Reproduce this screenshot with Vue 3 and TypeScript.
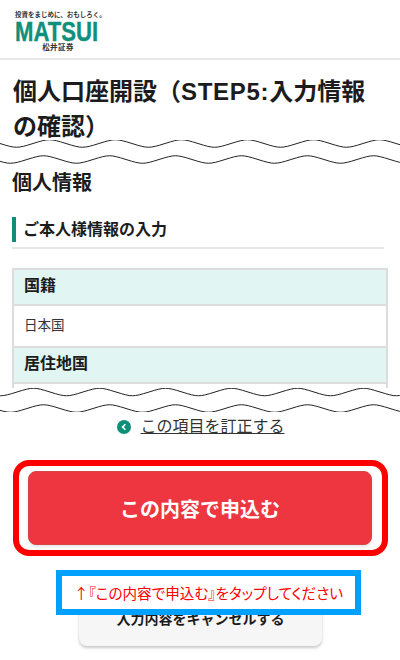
<script setup lang="ts">
const period = 66
function wave(y: number, phase: number): string {
  let d = `M${-period + phase} ${y}`
  for (let x = -period + phase; x < 420; x += period) {
    d += ` C${x + 16} ${y - 5} ${x + 17} ${y - 5} ${x + 33} ${y} S${x + 50} ${y + 5} ${x + 66} ${y}`
  }
  return d
}
const tearA = [wave(3.5, 33), wave(19.5, 27)]
const tearB = [wave(4, 17), wave(20.5, 27)]
</script>

<template>
  <div class="page">
    <header class="header">
      <div class="logo">
        <span class="tagline">投資をまじめに、おもしろく。</span>
        <span class="brand">MATSUI</span>
        <span class="firm">松井証券</span>
      </div>
    </header>

    <h1 class="title">個人口座開設（<span class="latin">STEP5:</span>入力情報の確認）</h1>

    <svg class="tear" viewBox="0 0 400 24" width="400" height="24">
      <path :d="tearA[0]" class="wave" />
      <path :d="tearA[1]" class="wave" />
    </svg>

    <h2 class="section">個人情報</h2>
    <h3 class="sub">ご本人様情報の入力</h3>

    <div class="table-clip">
      <div class="table">
        <div class="th">国籍</div>
        <div class="td">日本国</div>
        <div class="th">居住地国</div>
        <div class="td"></div>
      </div>
    </div>

    <svg class="tear" viewBox="0 0 400 24" width="400" height="24">
      <path :d="tearB[0]" class="wave" />
      <path :d="tearB[1]" class="wave" />
    </svg>

    <div class="fix">
      <svg class="fix-icon" viewBox="0 0 14 14" width="14" height="14">
        <circle cx="7" cy="7" r="7" fill="#0f8f78" />
        <path d="M8.4 4.2 5.6 7l2.8 2.8" fill="none" stroke="#fff" stroke-width="1.6" />
      </svg>
      <span class="fix-text">この項目を訂正する</span>
    </div>

    <div class="frame">
      <div class="apply">この内容で申込む</div>
    </div>

    <div class="cancel-wrap">
      <div class="cancel">入力内容をキャンセルする</div>
      <div class="note">↑『この内容で申込む』をタップしてください</div>
    </div>
  </div>
</template>

<style>
html,
body {
  margin: 0;
  background: #fff;
}
</style>

<style scoped>
.page {
  width: 400px;
  height: 660px;
  overflow: hidden;
  background: #fff;
  color: #1c1c1c;
  font-family: "Liberation Sans", "Noto Sans CJK JP", sans-serif;
  display: flex;
  flex-direction: column;
}
.header {
  height: 60px;
  flex: none;
  box-sizing: border-box;
  border-bottom: 2px solid #e8e8e8;
  padding: 11px 0 0 15px;
}
.logo {
  display: flex;
  flex-direction: column;
  width: 90px;
}
.tagline {
  font-size: 6.5px;
  line-height: 8px;
  font-weight: 700;
  white-space: nowrap;
  color: #333;
}
.brand {
  font-weight: 700;
  font-size: 28px;
  line-height: 22px;
  height: 22px;
  margin-top: 2px;
  color: #10907a;
  transform: scaleX(0.79);
  transform-origin: left center;
  white-space: nowrap;
  -webkit-text-stroke: 0.4px #10907a;
}
.firm {
  font-size: 7.5px;
  line-height: 9px;
  font-weight: 700;
  color: #333;
  text-align: center;
  width: 86px;
  letter-spacing: 0.4px;
}
.title {
  margin: 14px 28px 0 13px;
  font-size: 24px;
  line-height: 35px;
  font-weight: 700;
  height: 66px;
}
.latin {
  letter-spacing: 0.7px;
}
.tear {
  display: block;
  flex: none;
}
.wave {
  fill: none;
  stroke: #222;
  stroke-width: 1;
}
.section {
  margin: 4px 0 0 12px;
  font-size: 20px;
  line-height: 30px;
  font-weight: 700;
}
.sub {
  margin: 19px 16px 0 12px;
  padding: 0 0 5px;
  border-bottom: 2px solid #e6e6e6;
  font-size: 16px;
  line-height: 25px;
  font-weight: 700;
  display: block;
  position: relative;
  text-indent: 11px;
}
.sub::before {
  content: "";
  position: absolute;
  left: 0;
  top: 0;
  width: 4px;
  height: 25px;
  background: #0f8f78;
}
.table-clip {
  height: 120px;
  margin: 19px 12px 0;
  overflow: hidden;
  flex: none;
}
.table {
  border: 2px solid #ddd;
  border-bottom: 0;
}
.th {
  height: 34px;
  line-height: 31px;
  background: #e1f5f2;
  padding-left: 10px;
  font-size: 16px;
  font-weight: 700;
  border-bottom: 2px solid #ddd;
}
.td {
  height: 40px;
  line-height: 40px;
  padding-left: 10px;
  font-size: 13.5px;
  border-bottom: 2px solid #ddd;
  color: #333;
}
.fix {
  display: flex;
  align-items: center;
  justify-content: center;
  gap: 9px;
  height: 26px;
  margin-top: 2px;
  flex: none;
  padding-left: 2px;
}
.fix-text {
  font-size: 16px;
  line-height: 20px;
  text-decoration: underline;
  color: #333;
}
.frame {
  margin: 20px 12px 0 13px;
  box-sizing: border-box;
  height: 96px;
  border: 6px solid #ff0000;
  border-radius: 16px;
  padding: 5px 10px 5px 9px;
  flex: none;
}
.apply {
  height: 74px;
  box-sizing: border-box;
  background: #ee3640;
  border: 1px solid #d8444a;
  border-radius: 8px;
  color: #fff;
  font-size: 20px;
  font-weight: 700;
  display: flex;
  align-items: center;
  justify-content: center;
  box-shadow: 0 2px 3px rgba(0, 0, 0, 0.1);
}
.cancel-wrap {
  position: relative;
  margin-top: 14px;
  height: 80px;
  flex: none;
}
.cancel {
  position: absolute;
  left: 79px;
  top: 34px;
  width: 243px;
  height: 42px;
  box-sizing: border-box;
  background: #f6f6f6;
  border-radius: 8px;
  box-shadow: 0 2px 3px rgba(0, 0, 0, 0.22);
  padding-top: 5px;
  text-align: center;
  font-size: 14px;
  line-height: 20px;
  font-weight: 700;
}
.note {
  position: absolute;
  left: 56px;
  top: 0;
  width: 305px;
  height: 45px;
  box-sizing: border-box;
  background: #fff;
  border: 6px solid #00a0ff;
  color: #f00;
  font-family: "Noto Sans CJK JP", sans-serif;
  font-size: 14.6px;
  line-height: 33px;
  text-align: center;
  white-space: nowrap;
  font-feature-settings: "palt";
}
</style>
